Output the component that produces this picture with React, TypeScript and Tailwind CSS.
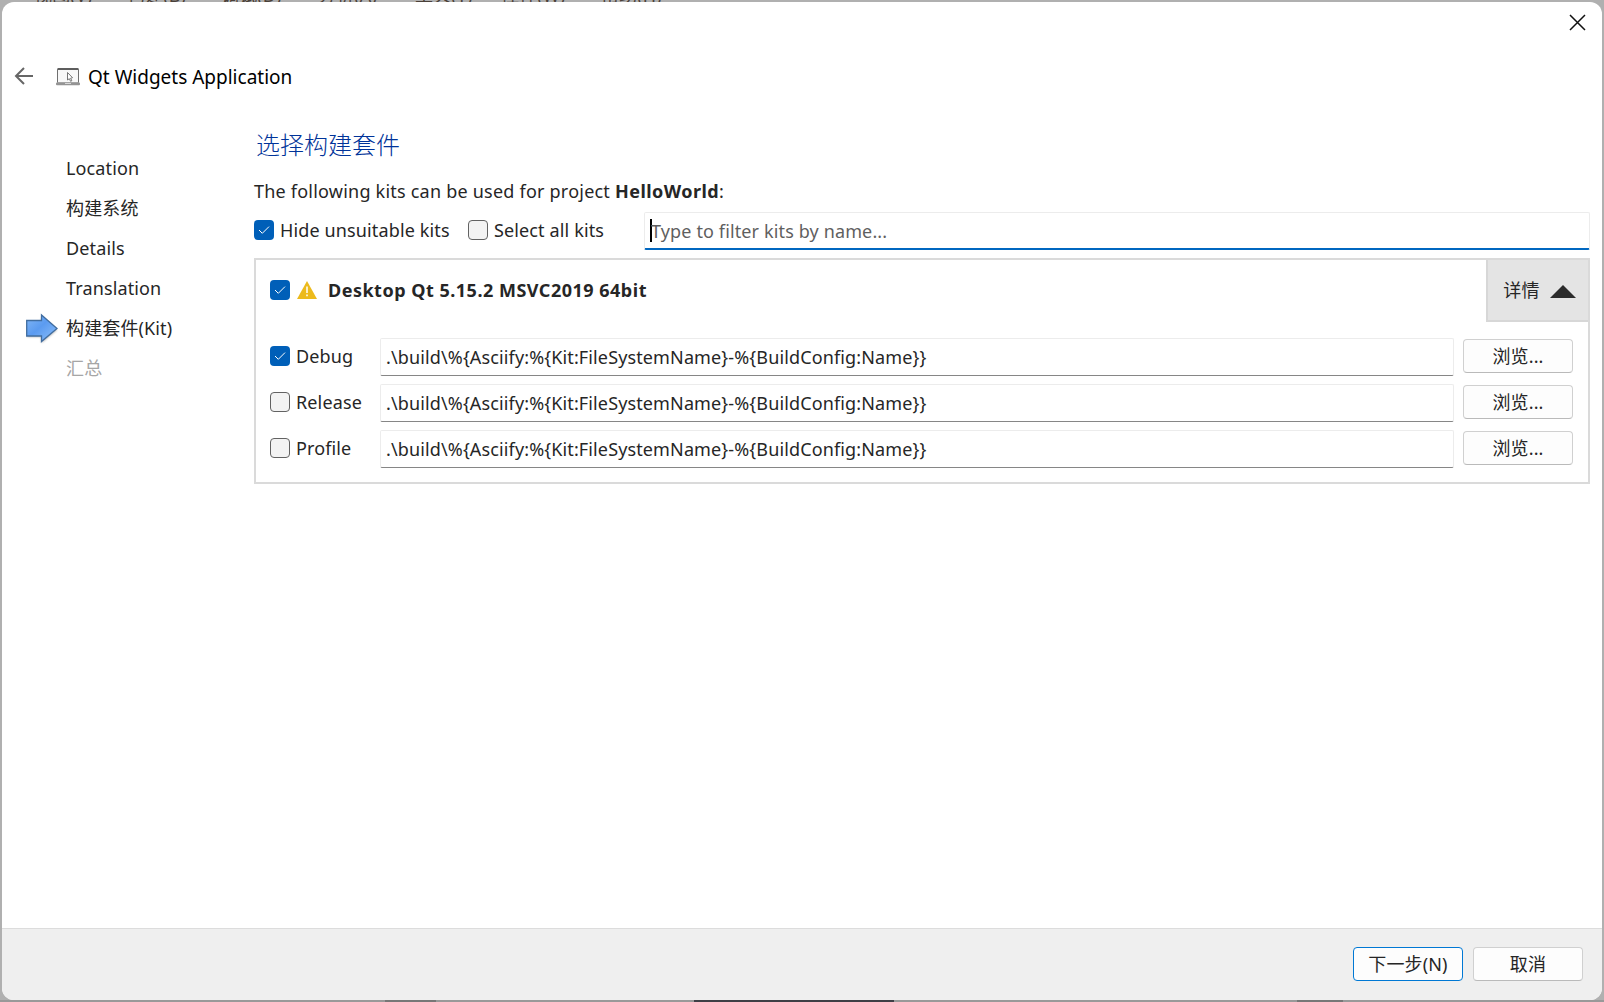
import React, { useState } from 'react';
import clsx from 'clsx';

const steps = [
    { label: 'Location' },
    { label: '构建系统' },
    { label: 'Details' },
    { label: 'Translation' },
    { label: '构建套件(Kit)', current: true },
    { label: '汇总', disabled: true },
];

const buildDir = '.\\build\\%{Asciify:%{Kit:FileSystemName}-%{BuildConfig:Name}}';

const CheckBox = ({ checked, onChange }: any) => {
    return (
        <button
            type="button"
            role="checkbox"
            aria-checked={checked}
            onClick={() => onChange(!checked)}
            className={clsx(
                'flex h-5 w-5 shrink-0 items-center justify-center rounded-[4px]',
                checked ? 'bg-[#005fb8]' : 'border border-[#626262] bg-[#f3f3f3]'
            )}
        >
            {checked && (
                <svg width="12" height="10" viewBox="0 0 12 10" fill="none" stroke="#fff" strokeWidth="1">
                    <path d="M1 5 L4.3 8.3 L11 1.6" />
                </svg>
            )}
        </button>
    )
}

const ArrowIcon = () => (
    <svg width="34" height="32" viewBox="0 0 34 32">
        <defs>
            <linearGradient id="arrow" x1="0" y1="0" x2="1" y2="1">
                <stop offset="0" stopColor="#82b7f7" />
                <stop offset="0.45" stopColor="#5b9bf0" />
                <stop offset="1" stopColor="#8ec0fa" />
            </linearGradient>
            <filter id="arrowShadow" x="-20%" y="-20%" width="140%" height="150%">
                <feGaussianBlur stdDeviation="1.2" />
            </filter>
        </defs>
        <path d="M1 9.5 H15.500 V4 L31 17 L15.500 30 V24 H1 Z" fill="#000" opacity="0.3" filter="url(#arrowShadow)" />
        <path d="M0.700 7.500 H15.500 V2 L31 15.500 L15.500 28.500 V23 H0.700 Z" fill="url(#arrow)" stroke="#416d9f" strokeWidth="1.300" />
    </svg>
)

const LaptopIcon = () => (
    <svg width="24" height="18" viewBox="0 0 24 18" fill="none">
        <rect x="1.500" y="1" width="21" height="14" rx="1" fill="#f8f8f8" stroke="#707070" />
        <path d="M1.500 1 H22.500" stroke="#404040" strokeWidth="1.500" />
        <rect x="0" y="14.500" width="24" height="2.800" rx="1" fill="#949494" />
        <path d="M9 15.500 H15" stroke="#d8d8d8" />
        <path d="M11.500 4.500 V12 L13.300 10.700 L14.600 13.300 L15.800 12.700 L14.600 10.200 L16.500 9.700 Z" fill="#fff" stroke="#666" strokeWidth="0.900" />
    </svg>
)

const BuildRow = ({ name, defaultChecked }: any) => {
    const [checked, setChecked] = useState(defaultChecked);

    return (
        <div className="flex h-[38px] items-center">
            <div className="flex w-[110px] items-center pb-[2px]">
                <CheckBox checked={checked} onChange={setChecked} />
                <span className="ml-[6px]">{name}</span>
            </div>
            <input
                type="text"
                defaultValue={buildDir}
                className="h-[38px] w-[1074px] rounded-[2px] border border-[#ececec] border-b-[#868686] bg-white px-[5px] pb-px outline-none"
            />
            <button className="ml-[9px] h-[34px] w-[110px] rounded-[4px] border border-[#d0d0d0] border-b-[#bababa] bg-[#fdfdfd] mb-[2px]">浏览...</button>
        </div>
    )
}

export default function App() {
    const [hide, setHide] = useState(true);
    const [all, setAll] = useState(false);
    const [kit, setKit] = useState(true);

    return (
        <div className="flex h-[1002px] w-[1604px] flex-col overflow-hidden bg-[#b0b0b0] font-['Noto_Sans','Noto_Sans_CJK_SC',sans-serif] text-[18px] leading-6 tracking-[0.13px] text-[#262626]">
            {/* menu bar of the main window behind */}
            <div className="flex h-[2px] shrink-0 items-end overflow-hidden pl-[34px] text-[#4a4038]">
                <div className="flex h-6 shrink-0 translate-y-[5px]">
                    <span className="w-[93px]">视图(V)</span>
                    <span className="w-[94px]">构建(B)</span>
                    <span className="w-[97px]">调试(D)</span>
                    <span className="w-[97px]">分析(A)</span>
                    <span className="w-[86px]">工具(T)</span>
                    <span className="w-[100px]">控件(W)</span>
                    <span>帮助(H)</span>
                </div>
            </div>

            <div className="mx-[2px] flex h-[998px] shrink-0 flex-col overflow-hidden rounded-[12px] bg-white">
                <div className="flex h-[42px] justify-end pr-[16px] pt-[12px]">
                    <svg width="17" height="17" viewBox="0 0 17 17" stroke="#111" strokeWidth="1.500">
                        <path d="M1 1 L16 16 M16 1 L1 16" />
                    </svg>
                </div>

                <div className="flex h-[64px] items-center pl-[11px]">
                    <svg width="20" height="18" viewBox="0 0 20 18" fill="none" stroke="#666" strokeWidth="2">
                        <path d="M20 9 H3 M11 1 L3 9 L11 17" />
                    </svg>
                    <div className="ml-[23px] mt-[2px]"><LaptopIcon /></div>
                    <span className="ml-[8px] mt-[2px] text-[19px] tracking-normal text-black">Qt Widgets Application</span>
                </div>

                <div className="flex flex-1">
                    <div className="flex w-[252px] flex-col pt-[40px]">
                        {steps.map((s) => (
                            <div key={s.label} className="flex h-[40px] items-center">
                                <div className="w-[64px] pl-[24px] pt-px">{s.current && <ArrowIcon />}</div>
                                <span className={clsx(s.disabled && 'text-[#a6a6a6]')}>{s.label}</span>
                            </div>
                        ))}
                    </div>

                    <div className="flex w-[1336px] flex-col">
                        <h1 className="mt-[19px] h-[36px] pl-[2px] text-[24px] font-light leading-9 tracking-normal text-[#003399]">选择构建套件</h1>
                        <p className="mt-[16px] tracking-[0.22px]">The following kits can be used for project <b className="tracking-[0.45px]">HelloWorld</b>:</p>

                        <div className="mt-[9px] flex h-[38px]">
                            <div className="flex w-[214px] items-center pb-[2px]">
                                <CheckBox checked={hide} onChange={setHide} />
                                <span className="ml-[6px]">Hide unsuitable kits</span>
                            </div>
                            <div className="flex w-[176px] items-center pb-[2px]">
                                <CheckBox checked={all} onChange={setAll} />
                                <span className="ml-[6px]">Select all kits</span>
                            </div>
                            <div className="flex w-[946px] items-center rounded-[2px] border border-b-2 border-[#ececec] border-b-[#0067c0] pl-[5px]">
                                <span className="h-[23px] w-[2px] bg-black" />
                                <input type="text" placeholder="Type to filter kits by name..." className="-ml-px flex-1 outline-none placeholder:text-[#5f5f5f]" />
                            </div>
                        </div>

                        <div className="mt-[8px] flex h-[226px] flex-col border-2 border-[#dadada]">
                            <div className="flex h-[62px] justify-between">
                                <div className="flex h-[60px] items-center pl-[14px]">
                                    <CheckBox checked={kit} onChange={setKit} />
                                    <svg className="ml-[7px]" width="20" height="18" viewBox="0 0 20 18">
                                        <path d="M10 0 L20 18 H0 Z" fill="#ecba1c" />
                                        <path d="M10 5.500 V12 M10 13.500 V15.300" stroke="#fff" strokeWidth="1.500" />
                                    </svg>
                                    <b className="ml-[11px] tracking-[0.5px]">Desktop Qt 5.15.2 MSVC2019 64bit</b>
                                </div>
                                <button className="flex w-[102px] items-center border-b-2 border-l-2 border-[#d7d7d7] bg-[#e4e4e4] pl-[15px]">
                                    <span className="w-[37px]">详情</span>
                                    <svg className="ml-[10px] mt-[2px]" width="26" height="13" viewBox="0 0 26 13">
                                        <path d="M13 0 L26 13 H0 Z" fill="#2b2b2b" />
                                    </svg>
                                </button>
                            </div>
                            <div className="mt-[16px] flex flex-col gap-[8px] pl-[14px]">
                                <BuildRow name="Debug" defaultChecked={true} />
                                <BuildRow name="Release" defaultChecked={false} />
                                <BuildRow name="Profile" defaultChecked={false} />
                            </div>
                        </div>
                    </div>
                </div>

                <div className="flex h-[72px] justify-end gap-[10px] border-t border-[#dcdcdc] bg-[#efefef] pr-[19px] pt-[18px]">
                    <button className="h-[34px] w-[110px] rounded-[4px] border border-[#0078d4] bg-[#fdfdfd]">下一步(N)</button>
                    <button className="h-[34px] w-[110px] rounded-[4px] border border-[#d0d0d0] border-b-[#bababa] bg-[#fdfdfd]">取消</button>
                </div>
            </div>

            {/* taskbar edge under the dialog */}
            <div className="flex h-[2px] shrink-0 bg-[#999999]">
                <div className="ml-[385px] w-[51px] bg-[#777777]" />
                <div className="ml-[258px] w-[200px] bg-[#3f3f46]" />
                <div className="ml-[403px] w-[46px] bg-[#777777]" />
            </div>
        </div>
    )
}
